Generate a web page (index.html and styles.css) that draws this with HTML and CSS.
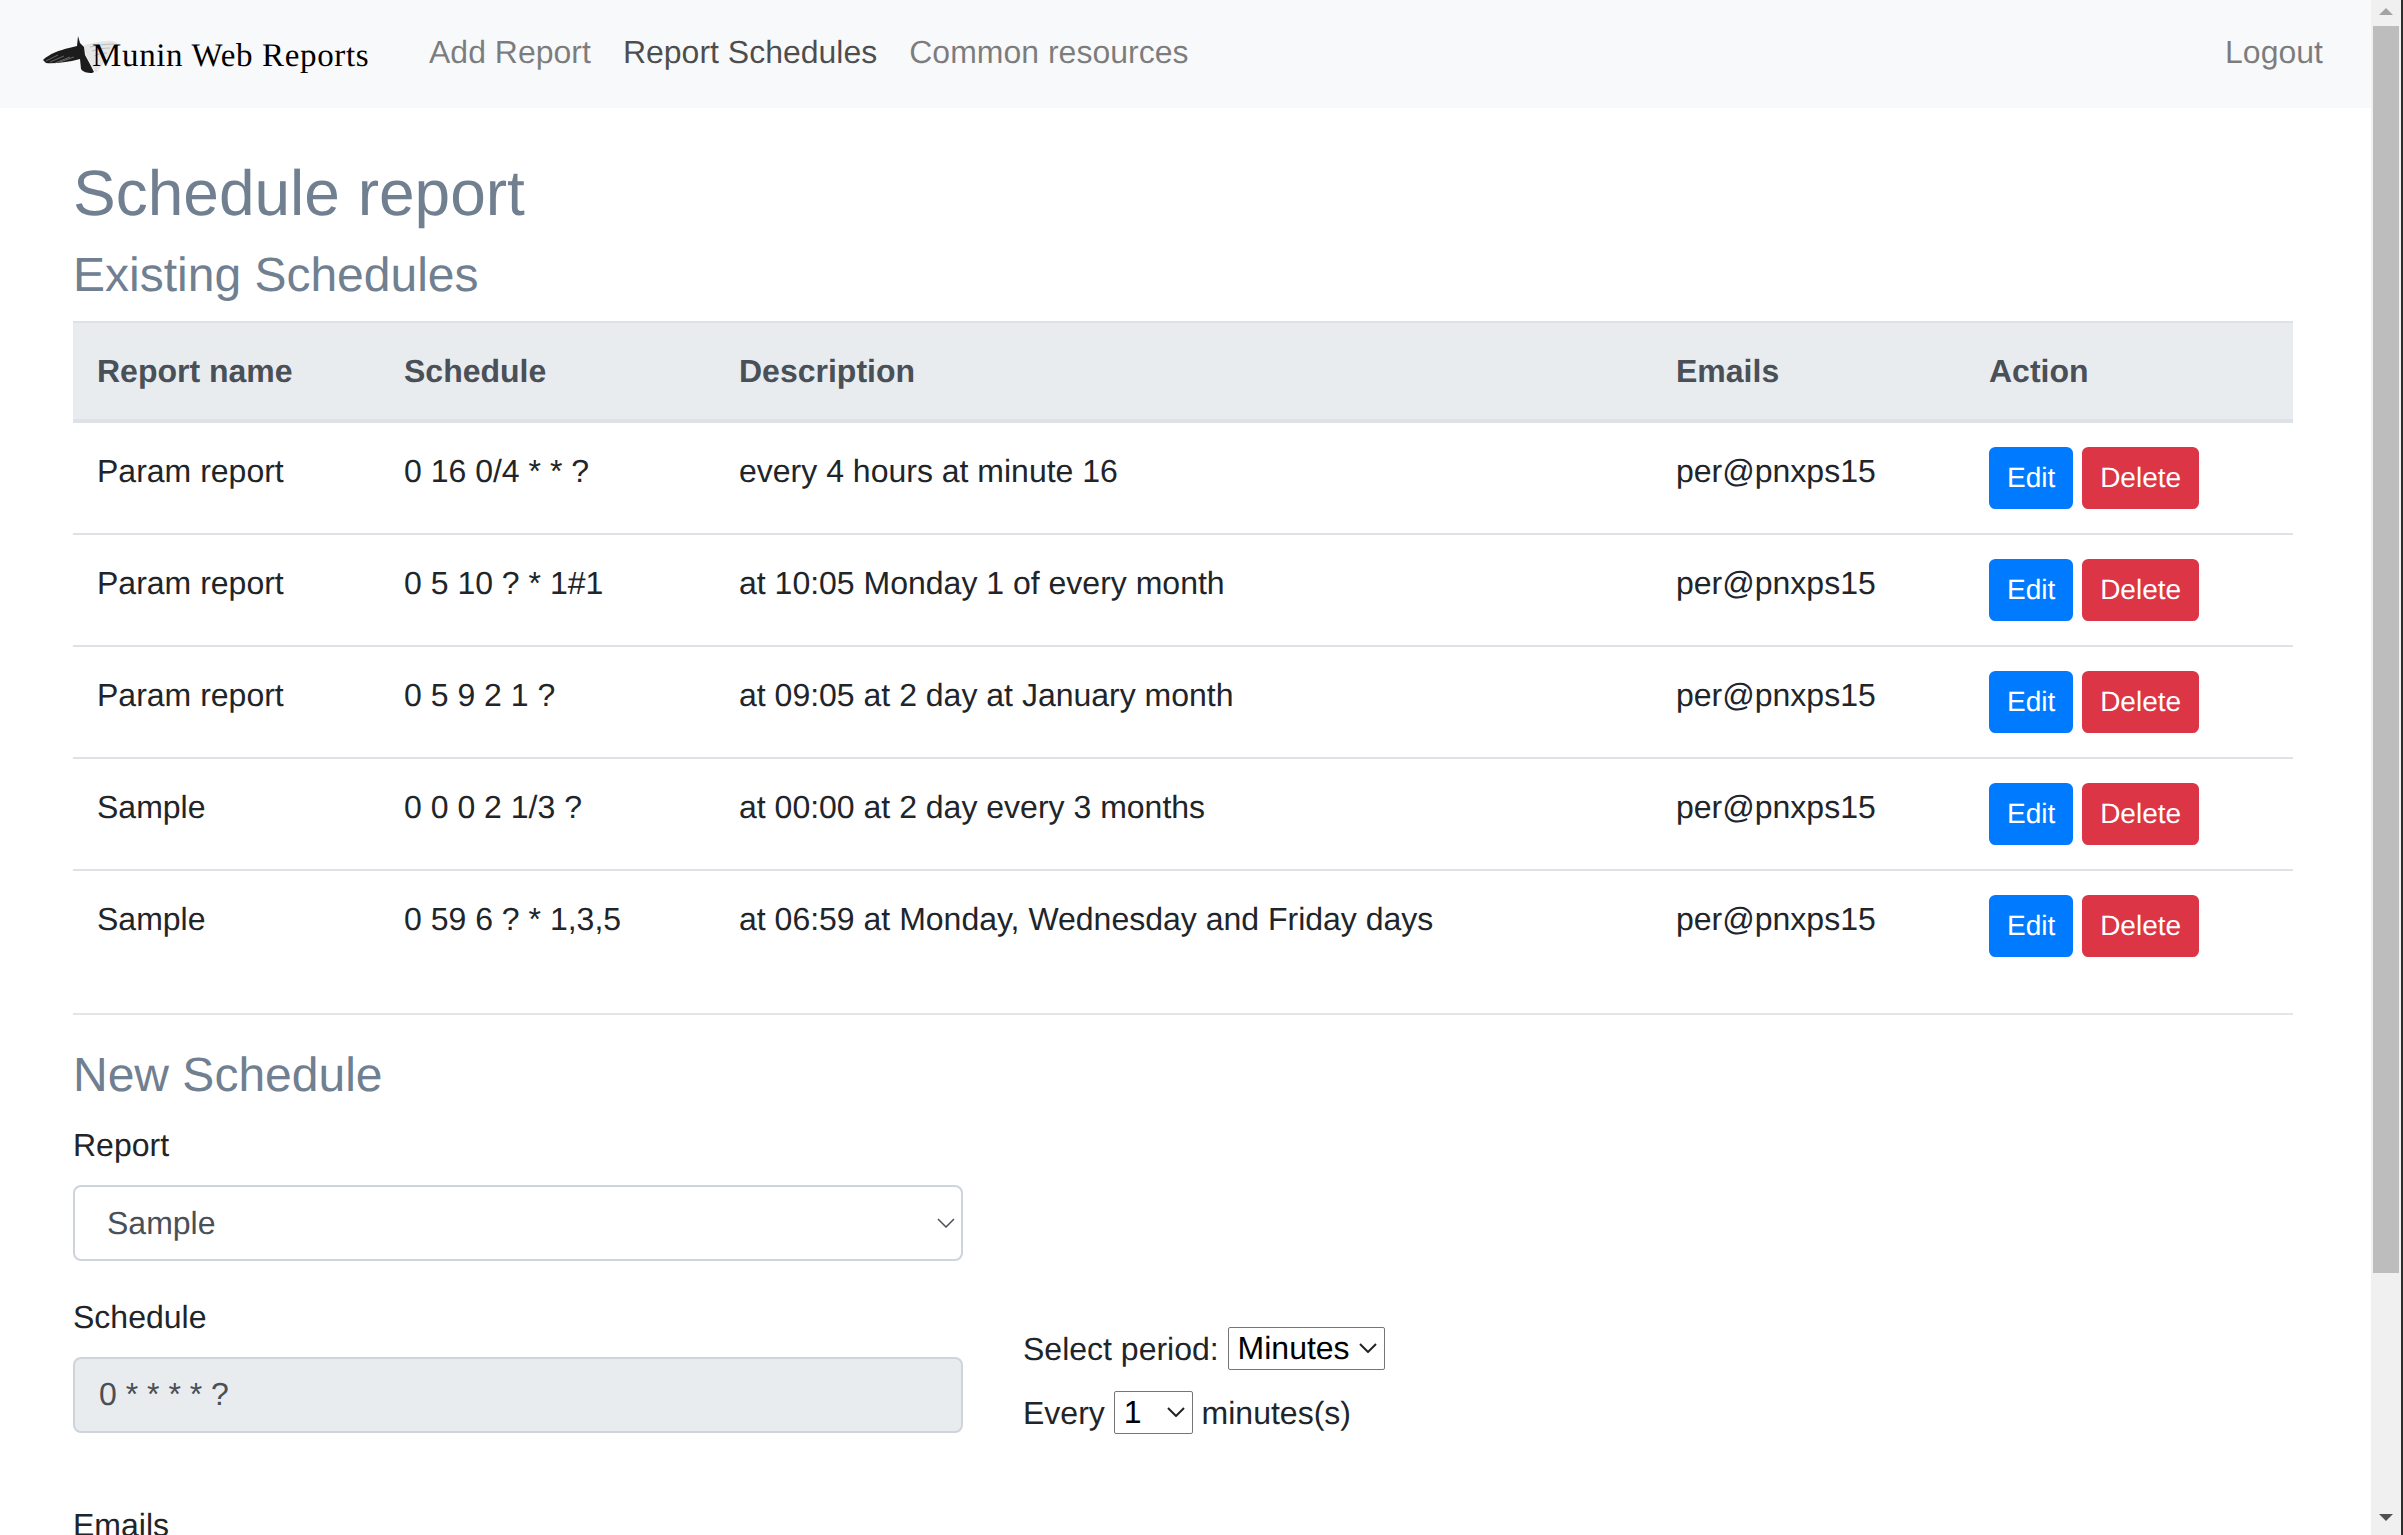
FILE: index.html
```html
<!DOCTYPE html>
<html lang="en">
<head>
<meta charset="utf-8">
<title>Munin Web Reports</title>
<link rel="stylesheet" href="styles.css">
</head>
<body>
<div class="viewport">
  <header class="navbar">
    <a class="brand" href="#">
      <svg class="raven" viewBox="0 0 80 42" aria-hidden="true">
        <path class="raven-pale" d="M42 11 C52 9 62 6 70 7 C76 8 77 10 75 12 C72 14 70 15 70 17 C66 21 63 27 60 31 L54 39 L44 22 Z"/>
        <path class="raven-line" d="M48 13 C56 11 64 10 72 10 M50 17 C56 15 62 14 68 14 M52 22 C56 20 60 19 65 19"/>
        <path class="raven-dark" d="M1 26 C7 20 18 16 27 14 L35 12 L36 2 L38 9 L42 13 L43 21 L49 32 L52 38 L50 39 C45 39 41 38 39 35 L38 25 L30 27 C22 28 12 30 4 29 Z"/>
        <path class="raven-feather" d="M4 27 L16 21 M8 28 L22 22 M13 29 L28 23 M18 28 L32 23"/>
      </svg>
      <span class="brand-text">Munin Web Reports</span>
    </a>
    <nav class="nav">
      <a class="nav-link" href="#">Add Report</a>
      <a class="nav-link active" href="#">Report Schedules</a>
      <a class="nav-link" href="#">Common resources</a>
    </nav>
    <a class="nav-link logout" href="#">Logout</a>
  </header>

  <main class="content">
    <h2 class="title">Schedule report</h2>
    <h4 class="subtitle">Existing Schedules</h4>
    <table class="schedules">
      <colgroup>
        <col class="col-name"><col class="col-schedule"><col class="col-desc"><col class="col-emails"><col class="col-action">
      </colgroup>
      <thead>
        <tr><th>Report name</th><th>Schedule</th><th>Description</th><th>Emails</th><th>Action</th></tr>
      </thead>
      <tbody>
        <tr><td>Param report</td><td>0 16 0/4 * * ?</td><td>every 4 hours at minute 16</td><td>per@pnxps15</td><td><a class="btn btn-edit" href="#">Edit</a> <a class="btn btn-delete" href="#">Delete</a></td></tr>
        <tr><td>Param report</td><td>0 5 10 ? * 1#1</td><td>at 10:05 Monday 1 of every month</td><td>per@pnxps15</td><td><a class="btn btn-edit" href="#">Edit</a> <a class="btn btn-delete" href="#">Delete</a></td></tr>
        <tr><td>Param report</td><td>0 5 9 2 1 ?</td><td>at 09:05 at 2 day at January month</td><td>per@pnxps15</td><td><a class="btn btn-edit" href="#">Edit</a> <a class="btn btn-delete" href="#">Delete</a></td></tr>
        <tr><td>Sample</td><td>0 0 0 2 1/3 ?</td><td>at 00:00 at 2 day every 3 months</td><td>per@pnxps15</td><td><a class="btn btn-edit" href="#">Edit</a> <a class="btn btn-delete" href="#">Delete</a></td></tr>
        <tr><td>Sample</td><td>0 59 6 ? * 1,3,5</td><td>at 06:59 at Monday, Wednesday and Friday days</td><td>per@pnxps15</td><td><a class="btn btn-edit" href="#">Edit</a> <a class="btn btn-delete" href="#">Delete</a></td></tr>
      </tbody>
    </table>
    <hr class="divider">
    <h4 class="subtitle">New Schedule</h4>
    <form class="schedule-form">
      <div class="field report-field">
        <label class="field-label" for="report">Report</label>
        <select class="control control-select" id="report"><option>Sample</option></select>
      </div>
      <div class="schedule-row">
        <div class="field schedule-field">
          <label class="field-label" for="cron">Schedule</label>
          <input class="control control-readonly" id="cron" value="0 * * * * ?" readonly>
        </div>
        <div class="picker">
          <div class="picker-line">Select period: <select class="mini mini-period"><option>Minutes</option></select></div>
          <div class="picker-line">Every <select class="mini mini-count"><option>1</option></select> minutes(s)</div>
        </div>
      </div>
      <div class="field report-field">
        <label class="field-label" for="emails">Emails</label>
        <input class="control" id="emails">
      </div>
    </form>
  </main>
</div>
<aside class="scrollbar" aria-hidden="true">
  <div class="sb-button"><span class="sb-up"></span></div>
  <div class="sb-thumb"></div>
  <div class="sb-track"></div>
  <div class="sb-button sb-button-end"><span class="sb-down"></span></div>
</aside>
<div class="window-edge"></div>
</body>
</html>
```
FILE: styles.css
```css
* { box-sizing: border-box; }

html, body {
  margin: 0;
  height: 100%;
  overflow: hidden;
}

body {
  display: flex;
  background: #fff;
  color: #212529;
  font-family: "Liberation Sans", Arial, sans-serif;
  font-size: 32px;
  line-height: 48px;
  text-rendering: geometricPrecision;
}

a { text-decoration: none; }

.viewport {
  flex: 1 1 auto;
  min-width: 0;
  height: 100%;
  overflow: hidden;
}

/* Navbar */
.navbar {
  display: flex;
  align-items: center;
  height: 108px;
  padding: 0 32px;
  background: #f8f9fa;
}

.brand {
  position: relative;
  display: block;
  width: 349px;
  margin-right: 32px;
  padding: 4px 0 0 60px;
  color: #000;
  font-family: "Liberation Serif", "Times New Roman", serif;
  font-size: 33px;
  letter-spacing: 0.65px;
  white-space: nowrap;
}

.raven {
  position: absolute;
  left: 10px;
  top: 6px;
  width: 80px;
  height: 42px;
  overflow: visible;
}

.raven-pale { fill: #e6e6e6; }
.raven-line { fill: none; stroke: #bcbcbc; stroke-width: 1; }
.raven-dark { fill: #1c1c1c; }
.raven-feather { fill: none; stroke: #7a7a7a; stroke-width: 0.8; }

.brand-text { position: relative; }

.nav { display: flex; }

.nav-link {
  display: block;
  padding: 8px 16px 12px;
  color: rgba(0, 0, 0, 0.5);
}

.nav-link.active { color: rgba(0, 0, 0, 0.7); }

.logout { margin-left: auto; }

/* Content */
.content {
  padding: 46.6px 78px 0 73px;
}

.title, .subtitle {
  margin: 0 0 16px;
  color: #708090;
  font-weight: normal;
  line-height: 1.2;
}

.title { font-size: 64px; }
.subtitle { font-size: 48px; }

/* Table */
.schedules {
  width: 100%;
  margin-bottom: 32px;
  border-collapse: collapse;
  table-layout: fixed;
}

.col-name { width: 307px; }
.col-schedule { width: 335px; }
.col-desc { width: 937px; }
.col-emails { width: 313px; }
.col-action { width: 328px; }

.schedules th,
.schedules td {
  padding: 24px;
  text-align: left;
  vertical-align: top;
  border-top: 2px solid #dee2e6;
}

.schedules th {
  background: #e9ecef;
  color: #495057;
  font-weight: bold;
  border-bottom: 4px solid #dee2e6;
}

.schedules tbody tr:first-child td { border-top: 0; }

.btn {
  display: inline-block;
  vertical-align: top;
  padding: 8px 16px;
  border: 2px solid transparent;
  border-radius: 6.4px;
  color: #fff;
  font-size: 28px;
  line-height: 42px;
}

.btn-edit { background: #007bff; border-color: #007bff; }
.btn-delete { background: #dc3545; border-color: #dc3545; }

.divider {
  height: 2px;
  margin: 0 0 32px;
  border: 0;
  background: rgba(0, 0, 0, 0.1);
}

/* Form */
.field-label {
  display: block;
  margin-bottom: 16px;
}

.report-field { width: 890px; margin-bottom: 32px; }

.control {
  display: block;
  width: 100%;
  height: 76px;
  padding: 12px 24px;
  border: 2px solid #ced4da;
  border-radius: 8px;
  background: #fff;
  color: #495057;
  font: inherit;
  text-rendering: geometricPrecision;
  outline: none;
}

.control-select {
  padding-left: 32px;
  appearance: none;
  background: #fff url("data:image/svg+xml,%3Csvg xmlns='http://www.w3.org/2000/svg' width='18' height='10'%3E%3Cpath d='M1 1l8 8 8-8' fill='none' stroke='%23495057' stroke-width='1.5'/%3E%3C/svg%3E") no-repeat right 6px center;
}

.control-readonly {
  background: #e9ecef;
}

.schedule-row {
  display: flex;
  gap: 60px;
  margin-bottom: 48px;
}

.schedule-field { flex: 0 0 890px; }

.picker { padding-top: 32px; }

.picker-line { margin-bottom: 16px; }

.mini {
  height: 43px;
  padding: 0 0 0 9px;
  border: 1px solid #767676;
  border-radius: 2px;
  color: #000;
  font: inherit;
  line-height: 41px;
  text-rendering: geometricPrecision;
  vertical-align: 1px;
  appearance: none;
  background: #fff url("data:image/svg+xml,%3Csvg xmlns='http://www.w3.org/2000/svg' width='18' height='10'%3E%3Cpath d='M1 1l8 8 8-8' fill='none' stroke='%23222' stroke-width='2'/%3E%3C/svg%3E") no-repeat right 7px center;
}

.mini-period { width: 157px; }
.mini-count { width: 79px; }

/* Window scrollbar, painted because the capture shows one */
.scrollbar {
  flex: 0 0 30px;
  display: flex;
  flex-direction: column;
  height: 100%;
  background: #f0f0f0;
}

.sb-button {
  flex: 0 0 26px;
  display: flex;
  justify-content: center;
  padding-top: 8px;
}

.sb-button-end { padding-top: 5px; }

.sb-up, .sb-down {
  width: 0;
  height: 0;
  border-left: 7px solid transparent;
  border-right: 7px solid transparent;
}

.sb-up { border-bottom: 7px solid #a3a3a3; }
.sb-down { border-top: 7px solid #505050; }

.sb-thumb {
  flex: 0 0 1247px;
  margin: 0 2px;
  background: #bdbdbd;
}

.sb-track { flex: 1 1 auto; }

.window-edge {
  flex: 0 0 2px;
  height: 100%;
  background: #2d2d2d;
}
```
